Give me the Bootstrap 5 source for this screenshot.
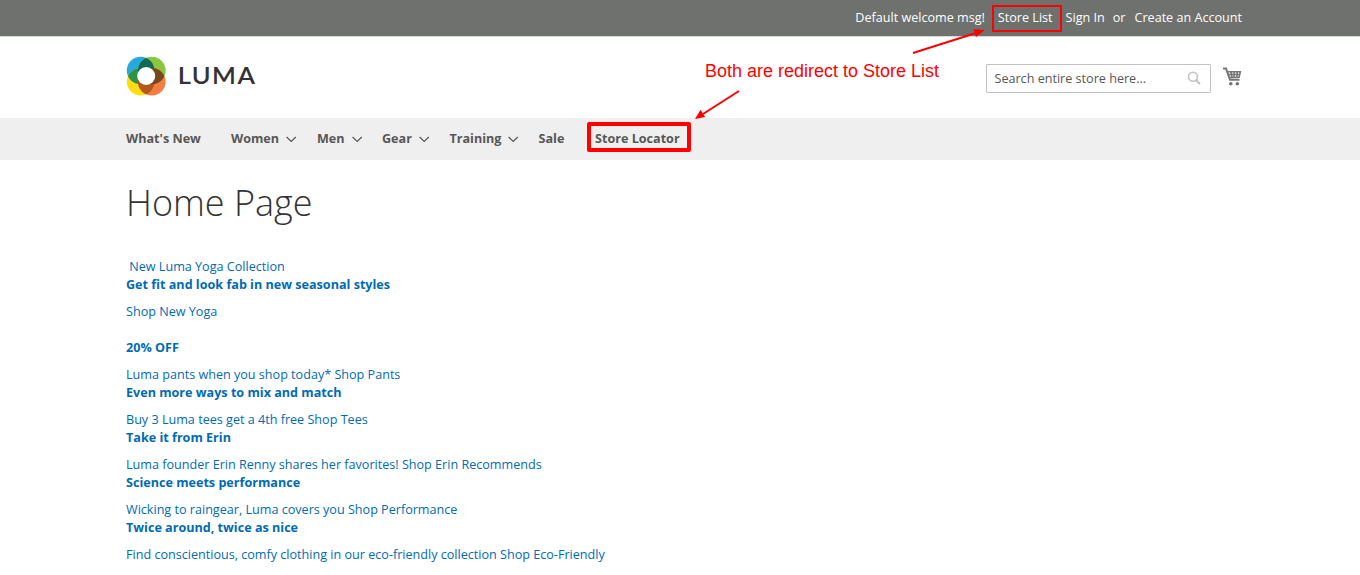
<!DOCTYPE html>
<html lang="en">
<head>
<meta charset="utf-8">
<meta name="viewport" content="width=device-width, initial-scale=1">
<title>Home Page</title>
<link href="https://cdn.jsdelivr.net/npm/bootstrap@5.3.0/dist/css/bootstrap.min.css" rel="stylesheet">
<style>
body{font-family:"Open Sans",sans-serif;font-size:12.6px;line-height:18px;color:#333;overflow:hidden}
a{text-decoration:none;color:#006bb4}
.wrap{width:1116px;margin-left:126px}
.topbar{height:36px;background:#6e716e;box-shadow:0 1px #d8d8d8}
.topbar .wrap,.topbar a{color:#fff}
.topbar .wrap{padding-top:9px}
.brandrow{height:82px}
.brandmark{margin:18px 0 0 -2px}
.searchbox{width:225px;height:29px;border:1px solid #c2c2c2;border-radius:1px;color:#575757;padding:0 8px 0 7.500px;margin-top:28px}
.cart{margin:31px -1px 0 12px}
.mainnav{height:42px;background:#efefef;font-weight:700}
.mainnav a{color:#575757;position:relative}
.mainnav .wrap{padding-top:12px}
.mainnav svg{margin-left:7px}
.i-new{width:105px}.i-women{width:86px}.i-men{width:65px}.i-gear{width:67.500px}.i-training{width:89px}.i-sale{width:56.500px}
h1{font-size:36px;font-weight:300;line-height:40px;padding-top:23px;margin:0 0 35px}
.copy p{margin:0 0 9px}
.copy .block-end{margin-bottom:18px}
.frame{position:absolute;border:2px solid #f00}
.frame-top{left:-6px;top:-4px;width:70px;height:27px}
.frame-nav{left:-8px;top:-8px;width:104px;height:30px;border-width:4px;border-radius:2px}
.arrows{position:absolute;left:0;top:0;pointer-events:none}
.note{position:absolute;left:705px;top:60px;font:18px/22px "Liberation Sans",sans-serif;color:#f00;white-space:nowrap}
</style>
<script src="https://cdn.jsdelivr.net/npm/bootstrap@5.3.0/dist/js/bootstrap.bundle.min.js"></script>
</head>
<body class="position-relative">
<div class="topbar">
  <div class="wrap d-flex justify-content-end">
    <span>Default welcome msg!</span>
    <a href="#" class="position-relative" style="margin-left:13px">Store List<span class="frame frame-top"></span></a>
    <a href="#" style="margin-left:13px">Sign In</a>
    <span style="margin-left:8px">or</span>
    <a href="#" style="margin-left:9px">Create an Account</a>
  </div>
</div>
<header class="wrap brandrow d-flex align-items-start">
  <svg class="brandmark" width="134" height="44" viewBox="124 54 134 44">
    <defs>
      <clipPath id="cb"><circle cx="140.600" cy="70.600" r="13.800"/></clipPath>
      <clipPath id="co"><circle cx="151.800" cy="81.800" r="13.800"/></clipPath>
    </defs>
    <circle cx="140.600" cy="70.600" r="13.800" fill="#29a8df"/>
    <circle cx="151.800" cy="70.600" r="13.800" fill="#8cc63f"/>
    <circle cx="140.600" cy="81.800" r="13.800" fill="#ffdd15"/>
    <circle cx="151.800" cy="81.800" r="13.800" fill="#f47e42"/>
    <g clip-path="url(#cb)"><circle cx="140.600" cy="81.800" r="13.800" fill="#2d9249"/><circle cx="151.800" cy="70.600" r="13.800" fill="#116a52"/></g>
    <g clip-path="url(#co)"><circle cx="140.600" cy="81.800" r="13.800" fill="#b5581c"/><circle cx="151.800" cy="70.600" r="13.800" fill="#75491f"/></g>
    <circle cx="146.200" cy="76" r="9" fill="#fff"/>
    <text transform="translate(177.800 83.700) scale(1.160 1)" font-family="Lato,sans-serif" font-weight="600" font-size="22" fill="#333" textLength="66.500" lengthAdjust="spacing">LUMA</text>
  </svg>
  <div class="searchbox ms-auto d-flex align-items-center justify-content-between">Search entire store here...
    <svg width="16" height="16" viewBox="0 0 16 16" fill="none" stroke="#c2c2c2" stroke-width="1.600"><circle cx="7" cy="5.800" r="4.500"/><path d="m10.300 9.300 3.700 3.700" stroke-width="2"/></svg>
  </div>
  <svg class="cart" width="20" height="20" viewBox="0 0 20 20" fill="none" stroke="#757575"><path d="M0 1.500h3l4 11.300h9.500" stroke-width="2"/><path d="M4 4.700h13.300l-1.200 5.600-9.600.2M5 7.500h12M8 5l1 5.500M11 5v5.500M14.200 5l-.5 5.500" stroke-width="1.600"/><circle cx="7.800" cy="16.700" r="1.800" fill="#757575" stroke="none"/><circle cx="14.300" cy="16.700" r="1.800" fill="#757575" stroke="none"/></svg>
</header>
<nav class="mainnav">
  <div class="wrap d-flex">
    <a href="#" class="i-new">What's New</a>
    <a href="#" class="i-women">Women<svg width="11" height="7" viewBox="0 0 11 7" fill="none" stroke="#575757" stroke-width="1.200"><path d="m.6 1 4.600 4.500L9.800 1"/></svg></a>
    <a href="#" class="i-men">Men<svg width="11" height="7" viewBox="0 0 11 7" fill="none" stroke="#575757" stroke-width="1.200"><path d="m.6 1 4.600 4.500L9.800 1"/></svg></a>
    <a href="#" class="i-gear">Gear<svg width="11" height="7" viewBox="0 0 11 7" fill="none" stroke="#575757" stroke-width="1.200"><path d="m.6 1 4.600 4.500L9.800 1"/></svg></a>
    <a href="#" class="i-training">Training<svg width="11" height="7" viewBox="0 0 11 7" fill="none" stroke="#575757" stroke-width="1.200"><path d="m.6 1 4.600 4.500L9.800 1"/></svg></a>
    <a href="#" class="i-sale">Sale</a>
    <a href="#">Store Locator<span class="frame frame-nav"></span></a>
  </div>
</nav>
<main class="wrap">
  <h1>Home Page</h1>
  <div class="copy"><a href="#">
    <span>&nbsp;New Luma Yoga Collection</span>
    <p><strong>Get fit and look fab in new seasonal styles</strong></p>
    <p class="block-end">Shop New Yoga</p>
    <p><strong>20% OFF</strong></p>
    <span>Luma pants when you shop today* Shop Pants</span>
    <p><strong>Even more ways to mix and match</strong></p>
    <span>Buy 3 Luma tees get a 4th free Shop Tees</span>
    <p><strong>Take it from Erin</strong></p>
    <span>Luma founder Erin Renny shares her favorites! Shop Erin Recommends</span>
    <p><strong>Science meets performance</strong></p>
    <span>Wicking to raingear, Luma covers you Shop Performance</span>
    <p><strong>Twice around, twice as nice</strong></p>
    <span>Find conscientious, comfy clothing in our eco-friendly collection Shop Eco-Friendly</span>
  </a></div>
</main>
<div class="note">Both are redirect to Store List</div>
<svg class="arrows" width="1000" height="130" stroke="#f00" stroke-width="2" fill="#f00"><path d="M913 53 976 33M739 91l-36 23"/><path stroke="none" d="m985 30-11.500-.8 2.500 7.800zM695 119l5.500-9.300 4.700 7.300z"/></svg>
</body>
</html>
